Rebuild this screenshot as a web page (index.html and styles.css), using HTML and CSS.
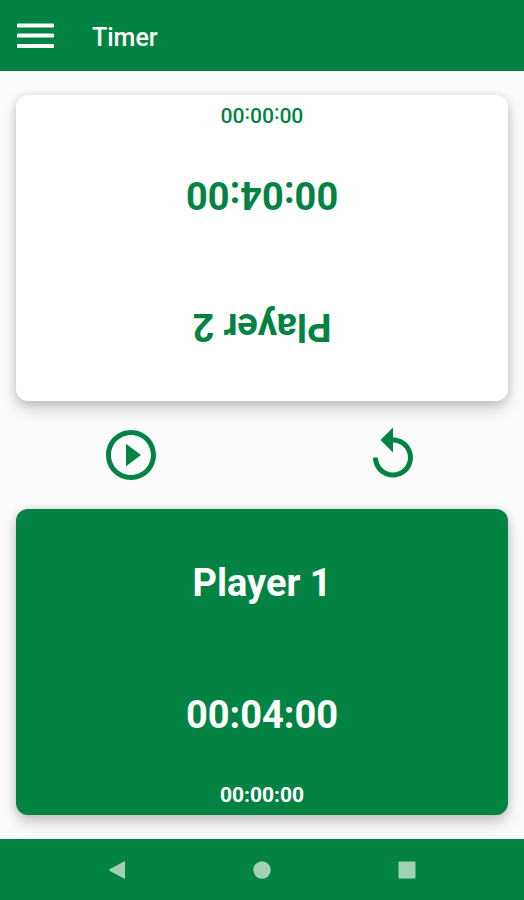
FILE: index.html
```html
<!DOCTYPE html>
<html lang="en">
<head>
<meta charset="utf-8">
<meta name="viewport" content="width=device-width, initial-scale=1">
<title>Timer</title>
<link rel="stylesheet" href="styles.css">
</head>
<body>
<header class="app-bar">
  <button class="icon-button" type="button" aria-label="Menu">
    <svg width="37" height="26" viewBox="0 0 37 26" fill="currentColor"><rect y=".5" width="37" height="4" rx="1"/><rect y="10.500" width="37" height="4" rx="1"/><rect y="21" width="37" height="4" rx="1"/></svg>
  </button>
  <h1 class="app-title">Timer</h1>
</header>
<main class="board">
  <section class="card card-flipped">
    <h2 class="player">Player 2</h2>
    <p class="clock">00:04:00</p>
    <p class="elapsed">00:00:00</p>
  </section>
  <div class="controls">
    <button class="icon-button" type="button" aria-label="Start">
      <svg width="60" height="60" viewBox="0 0 24 24" fill="currentColor"><path d="M10 16.500l6-4.500-6-4.500v9zM12 2C6.480 2 2 6.480 2 12s4.480 10 10 10 10-4.480 10-10S17.520 2 12 2zm0 18c-4.410 0-8-3.590-8-8s3.590-8 8-8 8 3.590 8 8-3.590 8-8 8z"/></svg>
    </button>
    <button class="icon-button" type="button" aria-label="Reset">
      <svg width="60" height="60" viewBox="0 0 24 24" fill="currentColor"><path d="M12 5V1L7 6l5 5V7c3.310 0 6 2.690 6 6s-2.690 6-6 6-6-2.690-6-6H4c0 4.420 3.580 8 8 8s8-3.580 8-8-3.580-8-8-8z"/></svg>
    </button>
  </div>
  <section class="card card-active">
    <h2 class="player">Player 1</h2>
    <p class="clock">00:04:00</p>
    <p class="elapsed">00:00:00</p>
  </section>
</main>
<nav class="system-bar" aria-label="System">
  <button class="icon-button" type="button" aria-label="Back">
    <svg width="18" height="18" viewBox="0 0 18 18" fill="currentColor"><path d="M17 1v16q0 1-1 .5L1.500 9.700q-1-.7 0-1.400L16 .5q1-.5 1 .5z"/></svg>
  </button>
  <button class="icon-button" type="button" aria-label="Home">
    <svg width="18" height="18" viewBox="0 0 18 18" fill="currentColor"><circle cx="9" cy="9" r="8.700"/></svg>
  </button>
  <button class="icon-button" type="button" aria-label="Recent apps">
    <svg width="18" height="18" viewBox="0 0 18 18" fill="currentColor"><rect x=".5" y=".5" width="17" height="17" rx="1"/></svg>
  </button>
</nav>
</body>
</html>
```
FILE: styles.css
```css
:root {
  --green: #028343;
}

* {
  box-sizing: border-box;
}

body {
  display: flex;
  flex-direction: column;
  min-height: 100vh;
  margin: 0;
  background: #fcfcfc;
  font-family: Roboto, sans-serif;
}

h1,
h2,
p {
  margin: 0;
}

.icon-button {
  display: flex;
  padding: 0;
  border: 0;
  background: none;
  color: inherit;
  cursor: pointer;
}

.icon-button svg {
  display: block;
}

.app-bar {
  display: flex;
  align-items: center;
  gap: 38px;
  padding: 19px 17px;
  background: var(--green);
  color: #fff;
}

.app-title {
  padding-top: 5px;
  font-size: 25px;
  font-weight: 500;
  line-height: 28px;
}

.board {
  flex: 1;
  display: grid;
  grid-template-rows: 1fr 108px 1fr;
  padding: 24px 16px;
}

.card {
  display: grid;
  grid-template-rows: 147fr 118fr 41fr;
  place-items: center;
  border-radius: 12px;
  background: #fff;
  color: var(--green);
  box-shadow: 0 8px 16px rgba(0, 0, 0, 0.2), 0 0 8px rgba(0, 0, 0, 0.12);
}

.card-flipped {
  transform: rotate(180deg);
  box-shadow: 0 -8px 16px rgba(0, 0, 0, 0.2), 0 0 8px rgba(0, 0, 0, 0.12);
}

.card-active {
  background: var(--green);
  color: #fff;
}

.player,
.clock {
  font-size: 38px;
  font-weight: 700;
  line-height: 48px;
}

.elapsed {
  font-size: 21px;
  font-weight: 700;
  line-height: 24px;
}

.card-flipped .elapsed {
  font-weight: 500;
}

.controls {
  display: grid;
  grid-template-columns: 1fr 1fr;
  place-items: center;
  margin: 0 -16px;
  color: var(--green);
}

.system-bar {
  display: grid;
  grid-template-columns: repeat(3, 1fr);
  place-items: center;
  height: 61px;
  padding: 0 45px;
  background: var(--green);
  color: #a0d0b6;
}
```
